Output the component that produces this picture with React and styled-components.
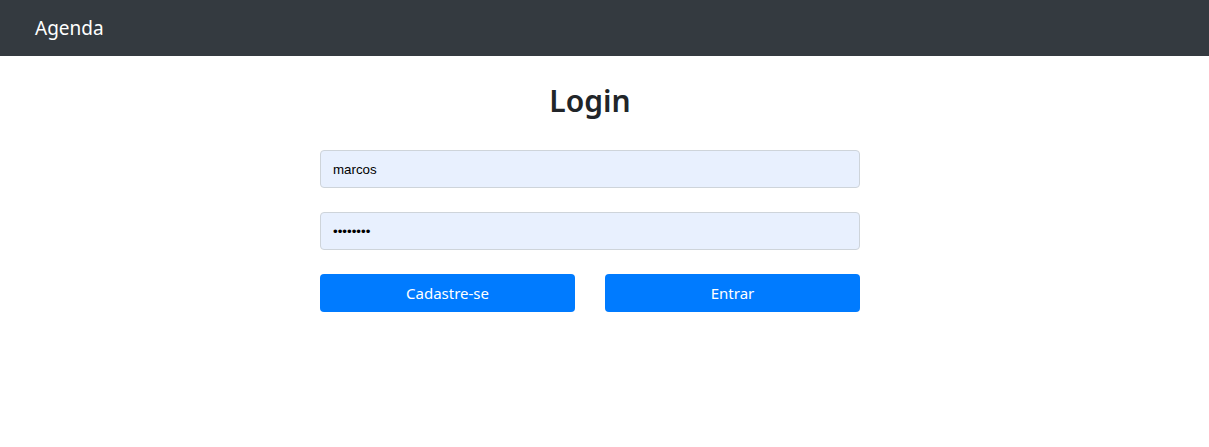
import React from "react";
import styled, { createGlobalStyle } from "styled-components";

const Global = createGlobalStyle`
  body {
    margin: 0;
    background: #fff;
    font-family: "Noto Sans", "Open Sans", sans-serif;
    color: #212529;
  }
`;

const NavBar = styled.nav`
  height: 56px;
  background: #343a40;
  display: flex;
  align-items: center;
  padding: 0 35px;
  box-sizing: border-box;
`;

const Brand = styled.a`
  color: #fff;
  font-size: 19px;
  text-decoration: none;
  line-height: 1;
`;

const Main = styled.main`
  display: flex;
  flex-direction: column;
  align-items: center;
  padding: 0 349px 0 320px;
`;

const Title = styled.h1`
  margin: 26px 0 0;
  font-size: 30px;
  font-weight: 600;
  line-height: 38px;
`;

const Form = styled.form`
  width: 540px;
  margin-top: 30px;
  display: flex;
  flex-direction: column;
  gap: 24px;
`;

const Input = styled.input`
  box-sizing: border-box;
  height: 38px;
  width: 100%;
  border: 1px solid #ced4da;
  border-radius: 4px;
  background: #e8f0fe;
  padding: 0 12px;
  font-family: "Liberation Sans", Arial, sans-serif;
  font-size: 13.33px;
  color: #000;
  outline: none;
`;

const Buttons = styled.div`
  display: grid;
  grid-template-columns: 1fr 1fr;
  gap: 30px;
`;

const Button = styled.button`
  height: 38px;
  border: none;
  border-radius: 4px;
  background: #007bff;
  color: #fff;
  font-family: "Noto Sans", "Open Sans", sans-serif;
  font-size: 15px;
  cursor: pointer;
`;

export default function App() {
  return (
    <>
      <Global />
      <NavBar>
        <Brand href="#">Agenda</Brand>
      </NavBar>
      <Main>
        <Title>Login</Title>
        <Form onSubmit={(e) => e.preventDefault()}>
          <Input type="text" defaultValue="marcos" />
          <Input type="password" defaultValue="12345678" />
          <Buttons>
            <Button type="button">Cadastre-se</Button>
            <Button type="submit">Entrar</Button>
          </Buttons>
        </Form>
      </Main>
    </>
  );
}
